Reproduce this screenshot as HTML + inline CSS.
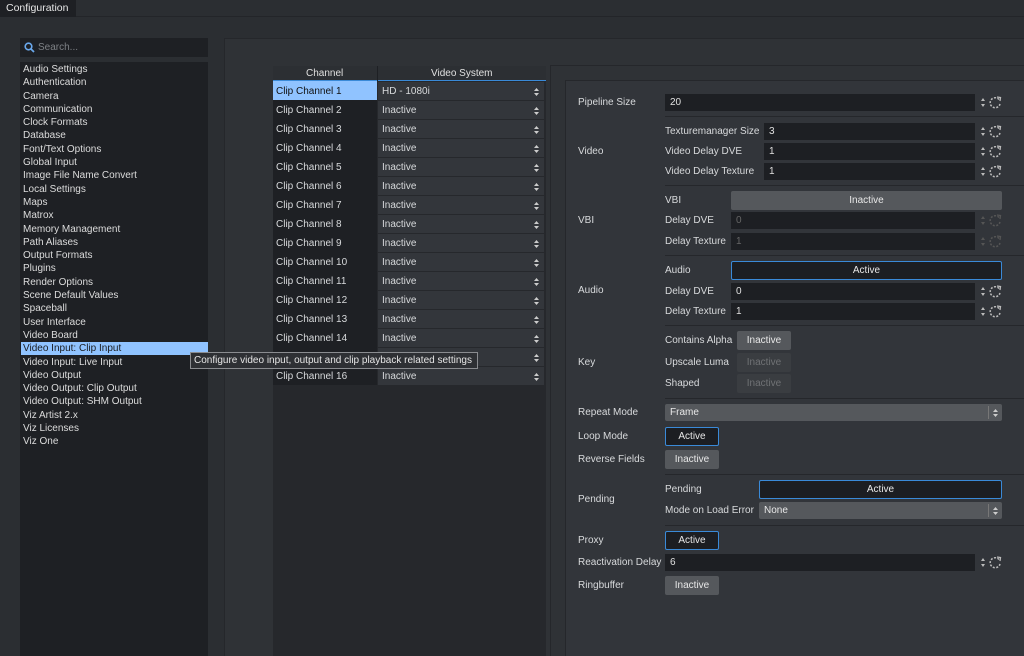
<!DOCTYPE html><html><head><style>
*{box-sizing:border-box;margin:0;padding:0}
body{width:1024px;height:656px;background:#2b2e32;font-family:"Liberation Sans",sans-serif;font-size:10px;color:#d8dadc;position:relative;overflow:hidden}
.a{position:absolute}
.t{position:absolute;white-space:nowrap;line-height:14px}
.inp{position:absolute;background:#1d1f23;height:17px;padding-left:5px;line-height:17px;color:#e0e0e0}
.dis{color:#666}
.btn{position:absolute;background:#55585c;height:19px;line-height:19px;text-align:center;border-radius:2px;color:#e8e8e8}
.btn.on{background:#1c1e22;border:1px solid #3a8ad8;line-height:17px}
.btn.off{background:#3a3d41;color:#707275}
.sep{position:absolute;height:1px;background:#25272b}
.row{position:absolute;left:273px;height:19px;line-height:21px}
</style></head><body>
<div class="a" style="left:0;top:0;width:1024px;height:17px;background:#2b2e32;border-bottom:1px solid #232529"></div>
<div class="a" style="left:0;top:0;width:76px;height:17px;background:#1e2024"></div>
<div class="t" style="left:6px;top:1px;font-size:10.5px;color:#e6e6e6">Configuration</div>
<div class="a" style="left:20px;top:38px;width:188px;height:19px;background:#1e2024"></div>
<svg class="a" style="left:24px;top:42px" width="11" height="11"><circle cx="4.5" cy="4.5" r="3.3" stroke="#6aa8ec" stroke-width="1.6" fill="none"/><line x1="7" y1="7" x2="10" y2="10" stroke="#6aa8ec" stroke-width="1.8"/></svg>
<div class="t" style="left:38px;top:41px;color:#7d8085">Search...</div>
<div class="a" style="left:20px;top:62px;width:188px;height:594px;background:#1e2024"></div>
<div class="a" style="left:21px;top:342px;width:187px;height:13px;background:#90c3ff"></div>
<div class="a" style="left:23px;top:63px;line-height:13.29px;color:#dcdcdc;font-size:10px">
Audio Settings<br>Authentication<br>Camera<br>Communication<br>Clock Formats<br>Database<br>Font/Text Options<br>Global Input<br>Image File Name Convert<br>Local Settings<br>Maps<br>Matrox<br>Memory Management<br>Path Aliases<br>Output Formats<br>Plugins<br>Render Options<br>Scene Default Values<br>Spaceball<br>User Interface<br>Video Board<br><span style="color:#1a1c20">Video Input: Clip Input</span><br>Video Input: Live Input<br>Video Output<br>Video Output: Clip Output<br>Video Output: SHM Output<br>Viz Artist 2.x<br>Viz Licenses<br>Viz One</div>
<div class="a" style="left:224px;top:38px;width:800px;height:618px;background:#2f3236;border-left:1px solid #25272b;border-top:1px solid #25272b"></div>
<div class="a" style="left:273px;top:66px;width:273px;height:590px;background:#26282c"></div>
<div class="a" style="left:273px;top:66px;width:273px;height:15px;background:#2c2f33;border-bottom:1px solid #3a8ad8"></div>
<div class="a" style="left:377px;top:66px;width:1px;height:15px;background:#1e2024"></div>
<div class="t" style="left:306px;top:67px;color:#e0e0e0">Channel</div>
<div class="t" style="left:431px;top:67px;color:#e0e0e0">Video System</div>
<div id="rows"></div>
<div class="a" style="left:550px;top:65px;width:474px;height:591px;background:#2f3236;border-left:1px solid #25272b;border-top:1px solid #25272b"></div>
<div class="a" style="left:565px;top:80px;width:459px;height:576px;background:#32353a;border-left:1px solid #25272b;border-top:1px solid #25272b"></div>
<div id="right"></div>
<div class="a" style="left:190px;top:352px;width:288px;height:17px;background:#2e3034;border:1px solid #8a8c90"></div>
<div class="t" style="left:194px;top:354px;color:#e6e6e6">Configure video input, output and clip playback related settings</div>
<script>
var sp='<svg style="position:absolute;right:5px;top:6px" width="5" height="8"><path d="M0 3L2.5 0L5 3ZM0 5L2.5 8L5 5Z" fill="#ccc"/></svg>';
var h='';
for(var i=0;i<16;i++){var y=81+i*19;
h+='<div class="row" style="top:'+y+'px;width:104px;padding-left:3px;'+(i==0?'background:#90c3ff;color:#111':'background:#1e2024')+'">Clip Channel '+(i+1)+'</div>';
h+='<div class="row" style="left:378px;top:'+(y+1)+'px;width:166px;height:18px;line-height:20px;background:#33363b;padding-left:4px">'+(i==0?'HD - 1080i':'Inactive')+sp+'</div>';}
document.getElementById('rows').innerHTML=h;
var r='';
function L(x,y,s,c){r+='<div class="t" style="left:'+x+'px;top:'+(y-6)+'px;'+(c||'')+'">'+s+'</div>';}
function I(x,y,v,d){r+='<div class="inp'+(d?' dis':'')+'" style="left:'+x+'px;top:'+(y-8)+'px;width:'+(975-x)+'px">'+v+'</div>';
var col=d?'#555':'#bbb';
r+='<svg class="a" style="left:979px;top:'+(y-6)+'px" width="24" height="13"><path d="M2 5L4 2L6 5ZM2 8L4 11L6 8Z" fill="'+col+'"/><path d="M20 3.5A5 5 0 1 0 21 8" stroke="'+col+'" stroke-width="1.5" fill="none" stroke-dasharray="2 1.5"/><path d="M18 1L21.5 1.5L21 5" stroke="'+col+'" stroke-width="1.3" fill="none"/></svg>';}
function B(x,y,w,s,c){r+='<div class="btn '+(c||'')+'" style="left:'+x+'px;top:'+(y-9)+'px;width:'+w+'px">'+s+'</div>';}
function C(x,y,s){r+='<div class="btn" style="left:'+x+'px;top:'+(y-8)+'px;width:'+(1002-x)+'px;height:17px;line-height:17px;text-align:left;padding-left:5px">'+s+'<span style="position:absolute;right:13px;top:2px;width:1px;height:13px;background:#777"></span><svg style="position:absolute;right:4px;top:5px" width="5" height="8"><path d="M0 3L2.5 0L5 3ZM0 5L2.5 8L5 5Z" fill="#ccc"/></svg></div>';}
function S(y){r+='<div class="sep" style="left:665px;top:'+y+'px;width:359px"></div>';}
L(578,102,'Pipeline Size');I(665,102,'20');S(116);
L(578,151,'Video');L(665,131,'Texturemanager Size');I(764,131,'3');L(665,151,'Video Delay DVE');I(764,151,'1');L(665,171,'Video Delay Texture');I(764,171,'1');S(185);
L(578,220,'VBI');L(665,200,'VBI');B(731,200,271,'Inactive');L(665,220,'Delay DVE');I(731,220,'0',1);L(665,241,'Delay Texture');I(731,241,'1',1);S(255);
L(578,290,'Audio');L(665,270,'Audio');B(731,270,271,'Active','on');L(665,291,'Delay DVE');I(731,291,'0');L(665,311,'Delay Texture');I(731,311,'1');S(325);
L(578,362,'Key');L(665,340,'Contains Alpha');B(737,340,54,'Inactive');L(665,362,'Upscale Luma');B(737,362,54,'Inactive','off');L(665,383,'Shaped');B(737,383,54,'Inactive','off');S(398);
L(578,412,'Repeat Mode');C(665,412,'Frame');
L(578,436,'Loop Mode');B(665,436,54,'Active','on');L(578,459,'Reverse Fields');B(665,459,54,'Inactive');S(474);
L(578,499,'Pending');L(665,489,'Pending');B(759,489,243,'Active','on');L(665,510,'Mode on Load Error');C(759,510,'None');S(525);
L(578,540,'Proxy');B(665,540,54,'Active','on');L(578,562,'Reactivation Delay');I(665,562,'6');L(578,585,'Ringbuffer');B(665,585,54,'Inactive');
document.getElementById('right').innerHTML=r;
</script>
</body></html>
